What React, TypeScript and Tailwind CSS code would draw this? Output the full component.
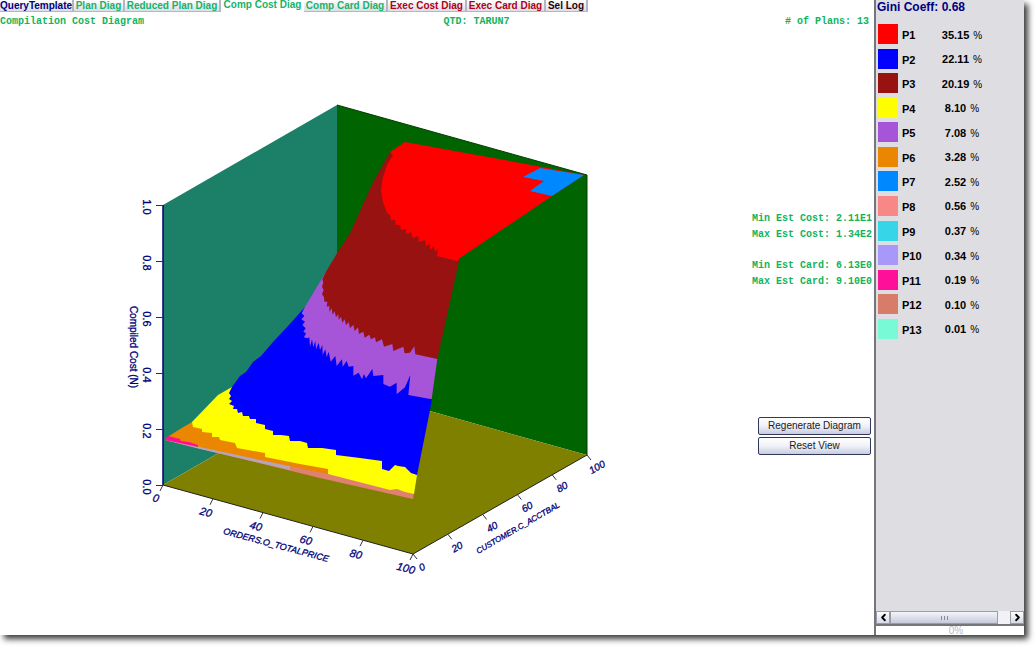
import { ChevronLeft, ChevronRight } from "lucide-react";

type Tab = { label: string; style: string };

const tabs: Tab[] = [
  { label: "QueryTemplate", style: "w-[74px] text-[#00007c]" },
  { label: "Plan Diag", style: "w-[51px] text-[#16b368]" },
  { label: "Reduced Plan Diag", style: "w-[96px] text-[#16b368]" },
  { label: "Comp Cost Diag", style: "w-[83px] text-[#16b368]" },
  { label: "Comp Card Diag", style: "w-[84px] text-[#16b368]" },
  { label: "Exec Cost Diag", style: "w-[79px] text-[#b00014]" },
  { label: "Exec Card Diag", style: "w-[79px] text-[#b00014]" },
  { label: "Sel Log", style: "w-[42px] text-[#2c0008]" },
];

const plans = [
  { name: "P1", share: "35.15", swatch: "bg-[#ff0000]" },
  { name: "P2", share: "22.11", swatch: "bg-[#0000ff]" },
  { name: "P3", share: "20.19", swatch: "bg-[#981212]" },
  { name: "P4", share: "8.10", swatch: "bg-[#ffff00]" },
  { name: "P5", share: "7.08", swatch: "bg-[#a654d8]" },
  { name: "P6", share: "3.28", swatch: "bg-[#ea8600]" },
  { name: "P7", share: "2.52", swatch: "bg-[#0088ff]" },
  { name: "P8", share: "0.56", swatch: "bg-[#f88888]" },
  { name: "P9", share: "0.37", swatch: "bg-[#36d6e8]" },
  { name: "P10", share: "0.34", swatch: "bg-[#a898fa]" },
  { name: "P11", share: "0.19", swatch: "bg-[#ff1098]" },
  { name: "P12", share: "0.10", swatch: "bg-[#d87c6a]" },
  { name: "P13", share: "0.01", swatch: "bg-[#78fad6]" },
];

const steps = [0, 1, 2, 3, 4, 5];

function TabBar() {
  return (
    <nav className="flex h-3 items-start" aria-label="Diagrams">
      {tabs.map((tab) => {
        const active = tab.label === "Comp Cost Diag";
        return (
          <button
            key={tab.label}
            type="button"
            className={
              (active
                ? "h-3 pb-0.5 bg-white "
                : "h-3 pt-px border-r-2 border-b border-[#b4b6c6] bg-gradient-to-b from-white to-[#dcdee8] ") +
              "shrink-0 text-center text-[10px] leading-[10px] font-bold whitespace-nowrap " +
              tab.style
            }
          >
            {tab.label}
          </button>
        );
      })}
    </nav>
  );
}

function AxisLabel({ x, y, angle, children }: { x: number; y: number; angle: number; children: string }) {
  return (
    <text transform={`translate(${x} ${y}) rotate(${angle})`} textAnchor="middle" dominantBaseline="central">
      {children}
    </text>
  );
}

function CostSurface() {
  return (
    <svg viewBox="0 30 756 560" className="block w-full" role="img" aria-label="Compiled cost surface">
      {/* walls and floor of the plot box */}
      <polygon points="163,205 337,105 337,385 163,485" fill="#1c8068" />
      <polygon points="337,105 587,175 587,455 337,385" fill="#006400" />
      <polygon points="163,485 337,385 587,455 413,554" fill="#808000" />

      {/* cost surface, from the cheapest region upward */}
      <polygon points="165,440 168,437 328,471 390,486 414,492 413,499 320,478" fill="#e08070" />
      <polygon points="165,440 200,445 290,464 290,470 200,449" fill="#b8a4b8" />
      <polygon points="166,438 180,429 192,422 210,430 330,466 328,474 265,461 200,447" fill="#ea8600" />
      <polygon points="165,440 168,436 176,438 180,439 181,441 189,442 198,445 198,447" fill="#ff1090" />
      <polygon
        points="192,422 218,395 232,387 250,395 414,465 417,475 414,494 405,492 397,489 390,490 328,474 328,469 300,464 265,457 265,453 237,448 235,443 220,440 219,437 212,437 212,433 202,432 202,429 193,427"
        fill="#ffff00"
      />
      <polygon
        points="305,307 289,325 273,342 261,356 253,362 246,372 240,376 232,387 229,393 231,396 229,399 232,401 229,404 234,406 233,409 237,409 238,413 242,412 243,416 249,416 250,419 256,419 256,423 265,425 265,429 273,431 273,435 281,435 289,436 290,441 300,441 307,443 308,448 322,448 336,450 336,455 360,458 382,461 382,469 389,471 395,465 398,466 405,467 411,473 417,475 430,410 432,399 380,340"
        fill="#0000ff"
      />
      <g transform="translate(290 250) scale(0.3333)">
        <polygon
          points="108,65 45,170 35,190 43,198 34,208 45,215 37,225 47,235 40,245 48,250 42,262 52,265 58,262 60,290 66,268 70,292 76,272 78,298 86,278 90,300 97,285 98,315 106,298 110,322 116,305 122,335 136,318 140,348 156,328 158,350 170,333 176,350 190,348 190,377 206,368 216,388 222,372 228,385 247,357 250,378 280,375 280,402 300,410 320,398 320,433 345,412 361,375 355,435 425,448 442,327 300,180"
          fill="#a654d8"
        />
        <polygon
          points="300,-294 250,-205 180,-50 141,10 108,65 97,88 100,98 96,110 101,120 96,132 102,142 103,155 112,155 110,170 118,168 118,185 125,175 128,194 134,184 138,202 145,193 146,210 153,200 157,218 164,208 168,226 176,216 180,235 190,224 194,243 204,232 207,252 220,245 224,263 238,254 243,268 255,262 258,277 276,268 282,290 307,282 310,303 340,290 344,310 360,308 373,289 376,313 442,327 509,24 440,-150"
          fill="#981212"
        />
      </g>
      <polygon
        points="390,152 405,142 537,166 584,175 552,196 460,258 457,261 437,256 438,249 435,252 434,246 430,250 430,244 426,246 425,240 419,242 418,236 413,238 411,232 406,234 406,229 401,230 400,225 396,225 395,220 391,220 390,215 387,213 383,202 381,190 383,177 387,165 393,155"
        fill="#ff0000"
      />
      <polygon points="540,168 584,175 552,196 530,191 544,181 523,177" fill="#0088ff" />

      {/* axes */}
      <path d="M163 205V485" stroke="#000078" strokeWidth="1.5" fill="none" />
      <path d="M163 485L413 554L587 455" stroke="#202020" fill="none" />
      <path d="M337 105L587 175V455" stroke="#003c00" fill="none" />
      <g stroke="#303040">
        {steps.map((i) => (
          <g key={i}>
            <line x1="156" x2="163" y1={205.5 + i * 56} y2={205.5 + i * 56} />
            <line x1={163 + i * 50} y1={485 + i * 13.8} x2={160 + i * 50} y2={491 + i * 13.8} />
            <line x1={413 + i * 34.8} y1={554 - i * 19.8} x2={417 + i * 34.8} y2={559 - i * 19.8} />
          </g>
        ))}
      </g>
      <g
        fill="#000078"
        stroke="#000078"
        strokeWidth="0.3"
        className="font-['Liberation_Sans',Arial,sans-serif] text-[10px]"
      >
        {steps.map((i) => (
          <g key={i} className="text-[11px]">
            <AxisLabel x={147} y={207 + i * 56} angle={90}>
              {(1 - i * 0.2).toFixed(1)}
            </AxisLabel>
            <g className="italic">
              <AxisLabel x={156 + i * 50} y={498 + i * 14} angle={15}>
                {String(i * 20)}
              </AxisLabel>
            </g>
            <g className="text-[10px] italic">
              <AxisLabel x={422 + i * 35} y={567 - i * 20} angle={-30}>
                {String(i * 20)}
              </AxisLabel>
            </g>
          </g>
        ))}
        <AxisLabel x={133} y={347} angle={90}>
          Compiled Cost (N)
        </AxisLabel>
        <g className="text-[9px] italic">
          <AxisLabel x={276} y={545} angle={15}>
            ORDERS.O_TOTALPRICE
          </AxisLabel>
        </g>
        <g className="text-[8px] italic">
          <AxisLabel x={518} y={528} angle={-30}>
            CUSTOMER.C_ACCTBAL
          </AxisLabel>
        </g>
      </g>
    </svg>
  );
}

const actionButton =
  "h-[18px] w-full rounded-[2px] border border-[#30385c] bg-gradient-to-b from-white via-[#f0f1f8] to-[#c8cce0] text-[10px] leading-4 text-[#202020]";

function DiagramPanel() {
  return (
    <main className="flex min-w-0 flex-1 flex-col">
      <TabBar />
      <div className="flex h-[18px] items-center justify-between pr-[5px] font-['Liberation_Mono',monospace] text-[10px] font-bold text-[#12b35c]">
        <h1>Compilation Cost Diagram</h1>
        <span className="pl-6">QTD: TARUN7</span>
        <span># of Plans: 13</span>
      </div>
      <div className="flex flex-1 items-start">
        <div className="min-w-0 flex-1">
          <CostSurface />
        </div>
        <div className="w-[118px] shrink-0 pt-[181px] pr-0.5 pl-0.5">
          <div className="flex flex-col items-end gap-[15px] font-['Liberation_Mono',monospace] text-[10px] leading-4 font-bold whitespace-nowrap text-[#12b35c]">
            <div>
              <p>Min Est Cost: 2.11E1</p>
              <p>Max Est Cost: 1.34E2</p>
            </div>
            <div>
              <p>Min Est Card: 6.13E0</p>
              <p>Max Est Card: 9.10E0</p>
            </div>
          </div>
          <div className="mt-[127px] mr-px flex flex-col gap-0.5">
            <button type="button" className={actionButton}>
              Regenerate Diagram
            </button>
            <button type="button" className={actionButton}>
              Reset View
            </button>
          </div>
        </div>
      </div>
    </main>
  );
}

function Legend() {
  return (
    <aside className="flex w-[150px] shrink-0 flex-col border-l-2 border-[#74767c] bg-[#dedde2]">
      <h2 className="pl-px text-[12px] leading-[14px] font-bold text-[#000080]">Gini Coeff: 0.68</h2>
      <table className="mt-2 h-[319px] border-collapse text-[11px] leading-4 font-bold text-black">
        <tbody>
          {plans.map((plan) => (
            <tr key={plan.name}>
              <td className="w-[26px] p-0 pl-0.5">
                <div className={"size-5 " + plan.swatch} />
              </td>
              <th scope="row" className="w-9 p-0 pt-0.5 text-left">
                {plan.name}
              </th>
              <td className="p-0 pt-0.5">
                <div className="flex w-12 items-baseline justify-center gap-1">
                  <span>{plan.share}</span>
                  <span className="text-[10px] font-normal">%</span>
                </div>
              </td>
            </tr>
          ))}
        </tbody>
      </table>
      <div className="mt-auto flex h-[14px] border-b border-[#74767c] bg-[#f2f2f6]">
        <button
          type="button"
          aria-label="Scroll left"
          className="flex w-[14px] items-center justify-center border border-[#9a9caa] bg-gradient-to-b from-white to-[#d8dae6]"
        >
          <ChevronLeft size={11} strokeWidth={4} />
        </button>
        <div className="flex min-w-0 flex-1 items-center justify-center gap-px border border-[#9a9caa] bg-gradient-to-b from-[#f4f5fa] to-[#c8cadc]">
          <i className="h-1 w-px bg-[#888a9c]" />
          <i className="ml-px h-1 w-px bg-[#888a9c]" />
          <i className="ml-px h-1 w-px bg-[#888a9c]" />
        </div>
        <button
          type="button"
          aria-label="Scroll right"
          className="ml-3 flex w-[14px] items-center justify-center border border-[#9a9caa] bg-gradient-to-b from-white to-[#d8dae6]"
        >
          <ChevronRight size={11} strokeWidth={4} />
        </button>
      </div>
      <div className="h-[10px] border-t border-[#74767c] bg-white pl-3 text-center text-[10px] leading-[10px] text-[#b8bac4]">
        0%
      </div>
    </aside>
  );
}

export default function App() {
  return (
    <div className="flex min-h-screen overflow-hidden bg-white pr-3 pb-3 font-['Liberation_Sans',Arial,sans-serif]">
      <div className="flex flex-1 bg-white shadow-[4px_4px_6px_0px_#3c3c3c]">
        <DiagramPanel />
        <Legend />
      </div>
    </div>
  );
}
